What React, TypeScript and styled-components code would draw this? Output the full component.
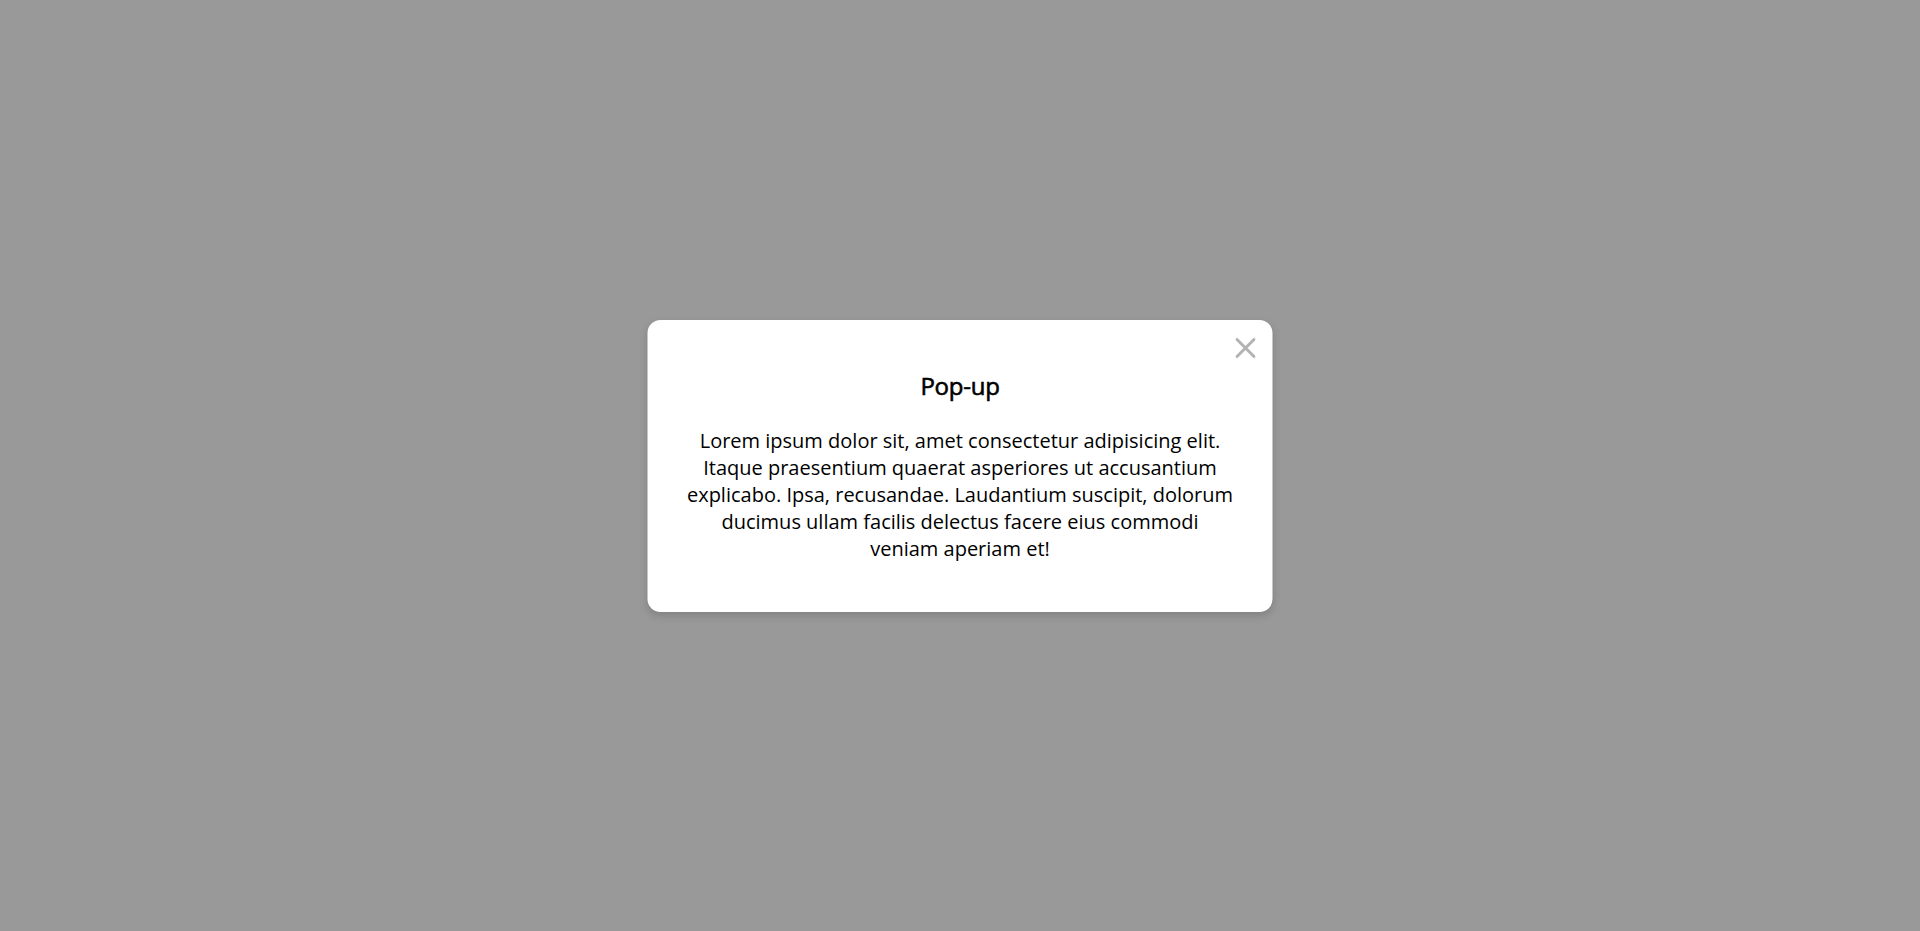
import React from 'react';
import styled, { createGlobalStyle } from 'styled-components';

const GlobalStyle = createGlobalStyle`
  * { box-sizing: border-box; }
  body { margin: 0; font-family: "Open Sans", sans-serif; color: #000; }
`;

const Overlay = styled.div`
  display: flex;
  align-items: center;
  justify-content: center;
  min-height: 100vh;
  background: #999;
`;

const Dialog = styled.section`
  position: relative;
  width: 625px;
  margin-right: 1px;
  transform: translateX(0.5px);
  padding: 49px 38px 50px;
  border-radius: 13px;
  background: #fff;
  box-shadow: 0 4px 8px rgba(0, 0, 0, 0.15);
  text-align: center;
`;

const CloseButton = styled.button`
  position: absolute;
  top: 18px;
  right: 17px;
  display: flex;
  padding: 0;
  border: 0;
  background: none;
  color: #b3b3b3;
  cursor: pointer;
`;

const Title = styled.h2`
  margin: 0 0 25px;
  font-size: 24px;
  line-height: 33px;
  font-weight: 400;
  letter-spacing: -0.25px;
  -webkit-text-stroke: 0.6px #000;
`;

const Text = styled.p`
  margin: 0;
  font-size: 20px;
  line-height: 27px;
`;

export default function App() {
  return (
    <Overlay>
      <GlobalStyle />
      <Dialog role="dialog" aria-labelledby="popup-title">
        <CloseButton aria-label="Close">
          <svg width="20" height="20" viewBox="0 0 20 20" stroke="currentColor" strokeWidth="3" strokeLinecap="round">
            <path d="M1.5 1.5 18.5 18.5M18.5 1.5 1.5 18.5" />
          </svg>
        </CloseButton>
        <Title id="popup-title">Pop-up</Title>
        <Text>
          Lorem ipsum dolor sit, amet consectetur adipisicing elit. Itaque praesentium quaerat
          asperiores ut accusantium explicabo. Ipsa, recusandae. Laudantium suscipit, dolorum
          ducimus ullam facilis delectus facere eius commodi veniam aperiam et!
        </Text>
      </Dialog>
    </Overlay>
  );
}
